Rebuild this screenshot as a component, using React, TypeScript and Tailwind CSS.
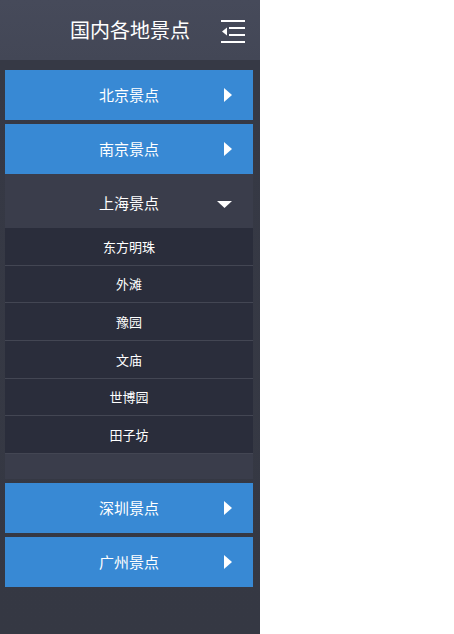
import React, { useState } from 'react';

type City = { name: string; spots: string[] };

const CITIES: City[] = [
  { name: '北京景点', spots: [] },
  { name: '南京景点', spots: [] },
  { name: '上海景点', spots: ['东方明珠', '外滩', '豫园', '文庙', '世博园', '田子坊'] },
  { name: '深圳景点', spots: [] },
  { name: '广州景点', spots: [] },
];

const FONT = { fontFamily: '"Microsoft YaHei", "Noto Sans CJK SC", sans-serif' };

const MenuIcon: React.FC = () => (
  <svg width="26" height="24" viewBox="0 0 26 24" className="block">
    <rect x="1" y="1" width="24" height="2" fill="#fff" />
    <rect x="9" y="8" width="16" height="2" fill="#fff" />
    <rect x="9" y="15" width="16" height="2" fill="#fff" />
    <rect x="1" y="22" width="24" height="2" fill="#fff" />
    <polygon points="7,8.5 7,16.5 2,12.5" fill="#fff" />
  </svg>
);

const ArrowRight: React.FC = () => (
  <svg width="8" height="14" viewBox="0 0 8 14" className="block">
    <polygon points="0,0 8,7 0,14" fill="#fff" />
  </svg>
);

const ArrowDown: React.FC = () => (
  <svg width="15" height="7" viewBox="0 0 15 7" className="block">
    <polygon points="0,0 15,0 7.5,7" fill="#fff" />
  </svg>
);

const App: React.FC = () => {
  const [open, setOpen] = useState('上海景点');

  return (
    <div className="flex min-h-[634px] bg-white" style={FONT}>
      <aside className="w-[260px] min-h-[634px] bg-[#363945] flex flex-col">
        <header className="h-[60px] bg-gradient-to-b from-[#464a5a] to-[#434756] flex items-center relative">
          <h1 className="w-full text-center text-[20px] text-white">国内各地景点</h1>
          <button className="absolute right-[14px] top-[19px]">
            <MenuIcon />
          </button>
        </header>

        <nav className="pl-[5px] pr-[7px] pt-[10px] flex flex-col gap-[4px] bg-gradient-to-b from-[#363945] to-[#353843] flex-1">
          {CITIES.map(city => {
            const isOpen = open === city.name && city.spots.length > 0;
            if (isOpen) {
              return (
                <div key={city.name} className="bg-[#3a3d4b] -mt-[4px] pb-[25px]">
                  <button
                    onClick={() => setOpen('')}
                    className="w-full h-[54px] pt-[4px] flex items-center relative text-white text-[15px]"
                  >
                    <span className="w-full text-center">{city.name}</span>
                    <span className="absolute left-[212px] top-[27px]">
                      <ArrowDown />
                    </span>
                  </button>
                  <ul>
                    {city.spots.map(spot => (
                      <li
                        key={spot}
                        className="h-[37.67px] bg-[#2a2d3b] border-b border-[#434653] flex items-center justify-center text-[13px] text-white"
                      >
                        {spot}
                      </li>
                    ))}
                  </ul>
                </div>
              );
            }
            return (
              <button
                key={city.name}
                onClick={() => setOpen(city.name)}
                className="w-full h-[50px] bg-[#3889d4] flex items-center relative text-white text-[15px]"
              >
                <span className="w-full text-center">{city.name}</span>
                <span className="absolute left-[219px] top-[18px]">
                  <ArrowRight />
                </span>
              </button>
            );
          })}
        </nav>
      </aside>
      <main className="flex-1 bg-white" />
    </div>
  );
};

export default App;
